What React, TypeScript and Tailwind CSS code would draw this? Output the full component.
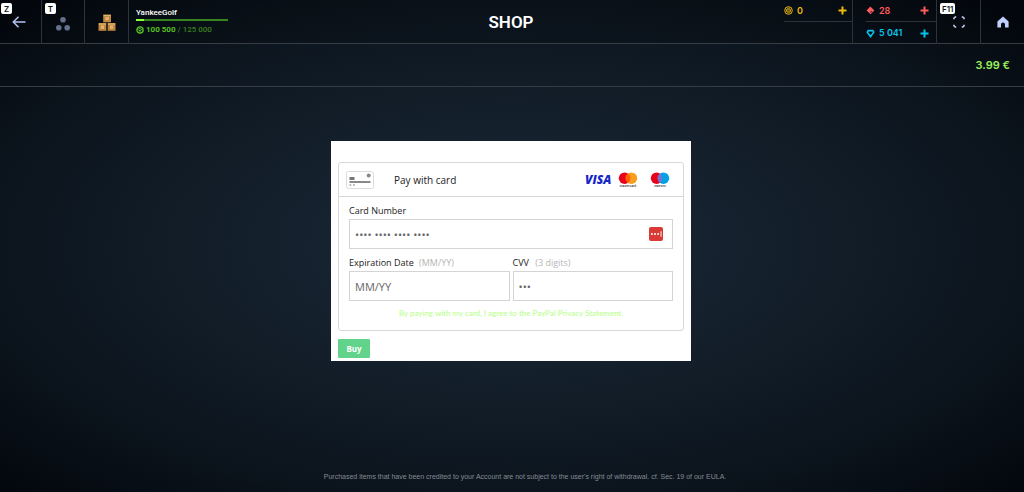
import type { ReactNode } from "react"

const KeyHint = ({ children }: { children: ReactNode }) => (
    <kbd className="absolute left-px top-[3px] flex h-[11px] min-w-[11px] items-center justify-center rounded-[2px] bg-white px-[2px] font-[Inter,sans-serif] text-[8px] font-semibold leading-none text-[#10161d]">
        {children}
    </kbd>
)

const ArrowIcon = () => (
    <svg width="14" height="12" viewBox="0 0 14 12" fill="none" stroke="#b4c4f2" strokeWidth="1.5">
        <path d="M6.5 .8 1.3 6l5.2 5.2M1.5 6H13.5" />
    </svg>
)

const DotsIcon = () => (
    <svg width="14" height="14" viewBox="0 0 14 14" fill="#65718c">
        <circle cx="7" cy="2.8" r="2.8" />
        <circle cx="2.8" cy="10.8" r="2.8" />
        <circle cx="11.2" cy="10.8" r="2.8" />
    </svg>
)

const CratesIcon = () => (
    <svg width="18" height="17" viewBox="0 0 18 17">
        {[[5.2, 0.5], [0.5, 9], [9.7, 9]].map(([x, y]) => (
            <g key={x}>
                <rect x={x} y={y} width="7.8" height="7.8" fill="#c0873f" />
                <rect x={x + 0.5} y={y + 0.5} width="6.8" height="1.4" fill="#e3b46e" />
                <rect x={x + 1.8} y={y + 2} width="4.2" height="4.2" fill="#e5b068" stroke="#a87436" strokeWidth=".5" />
            </g>
        ))}
    </svg>
)

const ExpIcon = () => (
    <svg width="8" height="8" viewBox="0 0 8 8" fill="none" stroke="#58c322">
        <circle cx="4" cy="4" r="3.1" strokeWidth="1.3" />
        <path d="M1 3.2 4 4.8 6.8 2.5M4 4.8V7M2.5 2 5 3" strokeWidth=".9" />
    </svg>
)

const CoinIcon = () => (
    <svg width="9" height="9" viewBox="0 0 9 9" fill="none" stroke="#edb90b">
        <circle cx="4.5" cy="4.5" r="3.8" strokeWidth="1" />
        <path d="m4.5 2.2 2 1.2v2.2l-2 1.2-2-1.2V3.4z" fill="#edb90b" fillOpacity=".5" strokeWidth=".8" />
    </svg>
)

const RubyIcon = () => (
    <svg width="9" height="9" viewBox="0 0 9 9">
        <path d="M4.3 .6 8.4 4.4 4.5 8.2 .6 4.4z" fill="#ff5b5b" />
        <path d="M4.6 5.2h2L4.7 7z" fill="#0a1119" />
    </svg>
)

const DiamondIcon = () => (
    <svg width="9" height="9" viewBox="0 0 9 9" fill="none" stroke="#06c3ee" strokeWidth="1.6">
        <path d="M2.2 1.6h4.6l.9 1.6-3.2 4.4-3.2-4.4z" />
    </svg>
)

const PlusIcon = () => (
    <svg width="9" height="9" viewBox="0 0 9 9" fill="none" stroke="currentColor" strokeWidth="2">
        <path d="M4.5 .5v8M.5 4.5h8" />
    </svg>
)

const FullscreenIcon = () => (
    <svg width="12" height="12" viewBox="0 0 12 12" fill="none" stroke="#c4d2f8" strokeWidth="1.5">
        <path d="M.9 3.2V2.2L2.2.9h1M8.8.9h1l1.3 1.3v1M11.1 8.8v1l-1.3 1.3h-1M3.2 11.1h-1L.9 9.8v-1" />
    </svg>
)

const HomeIcon = () => (
    <svg width="12" height="12" viewBox="0 0 12 12" fill="#c0d0ff">
        <path d="M6 .5 11.6 5.6V11.5H8V8.6a2 2 0 0 0-4 0v2.9H.4V5.6z" />
    </svg>
)

const CardIcon = () => (
    <svg width="28" height="18" viewBox="0 0 28 18">
        <rect x=".5" y=".5" width="27" height="17" rx="2" fill="#fff" stroke="#dcdcdc" />
        <rect x="3.5" y="6" width="5" height="3" fill="#777" />
        <rect x="3.5" y="10" width="21" height="2" fill="#888" />
        <circle cx="22.7" cy="4.5" r="2" fill="#888" />
        <path d="M3.5 14h1.8M7 14h1.8" stroke="#777" strokeWidth="1.2" />
    </svg>
)

const VisaLogo = () => (
    <svg width="30" height="18" viewBox="0 0 30 18" role="img" aria-label="Visa">
        <text x="1" y="13" fill="#1626c9" fontFamily="Open Sans, sans-serif" fontSize="12" fontStyle="italic" fontWeight="800">VISA</text>
    </svg>
)

type CirclesProps = { name: string; right: string; middle: string }

const CirclesLogo = ({ name, right, middle }: CirclesProps) => (
    <svg width="20" height="16" viewBox="0 0 20 16" role="img" aria-label={name}>
        <circle cx="6.6" cy="6.2" r="5.8" fill="#eb001b" />
        <circle cx="13.4" cy="6.2" r="5.8" fill={right} />
        <path d="M10 1.5a5.8 5.8 0 0 1 0 9.4 5.8 5.8 0 0 1 0-9.4z" fill={middle} />
        <text x="10" y="15" textAnchor="middle" fill="#222" fontFamily="Inter, sans-serif" fontSize="3" fontWeight="500">{name}</text>
    </svg>
)

const PasswordIcon = () => (
    <svg width="14" height="14" viewBox="0 0 14 14">
        <rect width="14" height="14" rx="2" fill="#d93a35" />
        <g fill="#fff">
            <circle cx="2.9" cy="7" r="1" />
            <circle cx="6" cy="7" r="1" />
            <circle cx="9.1" cy="7" r="1" />
            <rect x="11.6" y="4.2" width=".9" height="5.6" />
        </g>
    </svg>
)

type BalanceProps = { icon: ReactNode; value: string; label: string; className: string }

function Balance({ icon, value, label, className }: BalanceProps) {
    return (
        <div className={`flex h-[22px] items-center text-[9px] font-semibold ${className}`}>
            {icon}
            <span className="ml-1 flex-1">{value}</span>
            <button aria-label={`Add ${label}`}>
                <PlusIcon />
            </button>
        </div>
    )
}

function Header() {
    return (
        <header className="grid h-11 grid-cols-[1fr_auto_1fr] border-b border-[#363d45] bg-black/15">
            <div className="flex">
                <button aria-label="Back" className="relative flex w-[42px] items-center justify-center border-r border-[#2c333b] pr-1">
                    <KeyHint>Z</KeyHint>
                    <ArrowIcon />
                </button>
                <button aria-label="Team" className="relative flex w-[43px] items-center justify-center border-r border-[#2c333b] pt-[3px]">
                    <span className="absolute left-[2px] top-0">
                        <KeyHint>T</KeyHint>
                    </span>
                    <DotsIcon />
                </button>
                <button aria-label="Containers" className="flex w-11 items-center justify-center border-r border-[#2c333b]">
                    <CratesIcon />
                </button>
                <div className="w-[99px] pl-[7px] pt-2 font-[Roboto,sans-serif]">
                    <p className="text-[8px] font-medium leading-[10px] text-white">YankeeGolf</p>
                    <div className="mt-px h-[2px] bg-[#36861d]">
                        <div className="h-full w-2 bg-[#8cff3c]" />
                    </div>
                    <p className="mt-1 flex items-center gap-[2px] whitespace-nowrap text-[8px] font-medium leading-[10px] text-[#37801f]">
                        <ExpIcon />
                        <span><b className="font-bold text-[#58c322]">100 500</b> / 125 000</span>
                    </p>
                </div>
            </div>
            <h1 className="self-center pr-[2px] font-[Roboto,sans-serif] text-[17px] font-semibold leading-none text-white">SHOP</h1>
            <div className="flex justify-end">
                <div className="w-[69px] border-r border-[#2c333b]">
                    <Balance icon={<CoinIcon />} value="0" label="coins" className="border-b border-[#2c333b] pr-[5px] text-[#edb90b]" />
                </div>
                <div className="w-[84px] border-r border-[#2c333b] pl-[13px]">
                    <Balance icon={<RubyIcon />} value="28" label="rubies" className="border-b border-[#2c333b] pr-[7px] text-[#ff5b5b]" />
                    <Balance icon={<DiamondIcon />} value="5 041" label="diamonds" className="pr-[7px] text-[#06c3ee]" />
                </div>
                <button aria-label="Fullscreen" className="relative flex w-11 items-center justify-center border-r border-[#2c333b]">
                    <span className="absolute left-[2px] top-0">
                        <KeyHint>F11</KeyHint>
                    </span>
                    <FullscreenIcon />
                </button>
                <button aria-label="Home" className="flex w-[43px] items-center justify-center">
                    <HomeIcon />
                </button>
            </div>
        </header>
    )
}

const inputClass = "h-[30px] w-full min-w-0 border border-[#d4d4d4] bg-white px-[5px] text-[11px] text-[#555] outline-none placeholder:text-[#666]"

function PaymentForm() {
    return (
        <form className="w-[360px] max-w-full bg-white px-[7px] pb-[3px] pt-[21px] font-['Open_Sans','Noto_Sans',sans-serif] text-[#222]">
            <section className="rounded-[3px] border border-[#d8d8d8]">
                <div className="flex h-[34px] items-center border-b border-[#d8d8d8] pl-[7px] pr-[13px]">
                    <CardIcon />
                    <h2 className="ml-5 flex-1 pt-px text-[10px]">Pay with card</h2>
                    <VisaLogo />
                    <span className="ml-1 flex gap-3">
                        <CirclesLogo name="mastercard" right="#f79e1b" middle="#ff5f00" />
                        <CirclesLogo name="maestro" right="#00a2e5" middle="#7375cf" />
                    </span>
                </div>
                <div className="px-[10px] pb-[11px] pt-[7px]">
                    <label htmlFor="number" className="block pb-px text-[9px] leading-[14px]">Card Number</label>
                    <div className="relative">
                        <input id="number" placeholder="•••• •••• •••• ••••" className={inputClass} />
                        <button type="button" aria-label="Fill from password manager" className="absolute right-[10px] top-2">
                            <PasswordIcon />
                        </button>
                    </div>
                    <div className="mt-[7px] grid grid-cols-2 gap-[3px]">
                        <div>
                            <label htmlFor="expiry" className="block pb-px text-[9px] leading-[14px]">
                                Expiration Date <span className="ml-[3px] text-[#b5b5b5]">(MM/YY)</span>
                            </label>
                            <input id="expiry" placeholder="MM/YY" className={inputClass} />
                        </div>
                        <div>
                            <label htmlFor="cvv" className="block pb-px text-[9px] leading-[14px]">
                                CVV <span className="ml-1 text-[#b5b5b5]">(3 digits)</span>
                            </label>
                            <input id="cvv" placeholder="•••" className={inputClass} />
                        </div>
                    </div>
                    <p className="mt-[6px] text-center font-[Lato,sans-serif] text-[8px] leading-[12px]">
                        <a href="#privacy" className="text-[#b5ff85]">By paying with my card, I agree to the PayPal Privacy Statement.</a>
                    </p>
                </div>
            </section>
            <button type="submit" className="mt-2 block h-[19px] w-8 rounded-[1px] bg-[#62d38b] text-[8px] font-bold text-white">Buy</button>
        </form>
    )
}

export default function App() {
    return (
        <div className="flex min-h-screen flex-col bg-[radial-gradient(ellipse_at_center,#1a2938_0%,#14202c_35%,#0c151e_70%,#03070d_100%)] font-[Inter,sans-serif]">
            <Header />
            <div className="flex h-[43px] items-center justify-end border-b border-[#363d45] pr-[14px]">
                <span className="text-[11px] font-semibold text-[#98f05c]">3.99 €</span>
            </div>
            <main className="flex flex-1 justify-center pt-[54px]">
                <div className="max-w-full self-start pr-[2px]">
                    <PaymentForm />
                </div>
            </main>
            <footer className="pb-[9px] pl-[26px] text-center font-['Liberation_Sans',sans-serif] text-[7px] leading-[12px] text-[#858b91]">
                Purchased items that have been credited to your Account are not subject to the user's right of withdrawal. cf. Sec. 19 of our EULA.
            </footer>
        </div>
    )
}
